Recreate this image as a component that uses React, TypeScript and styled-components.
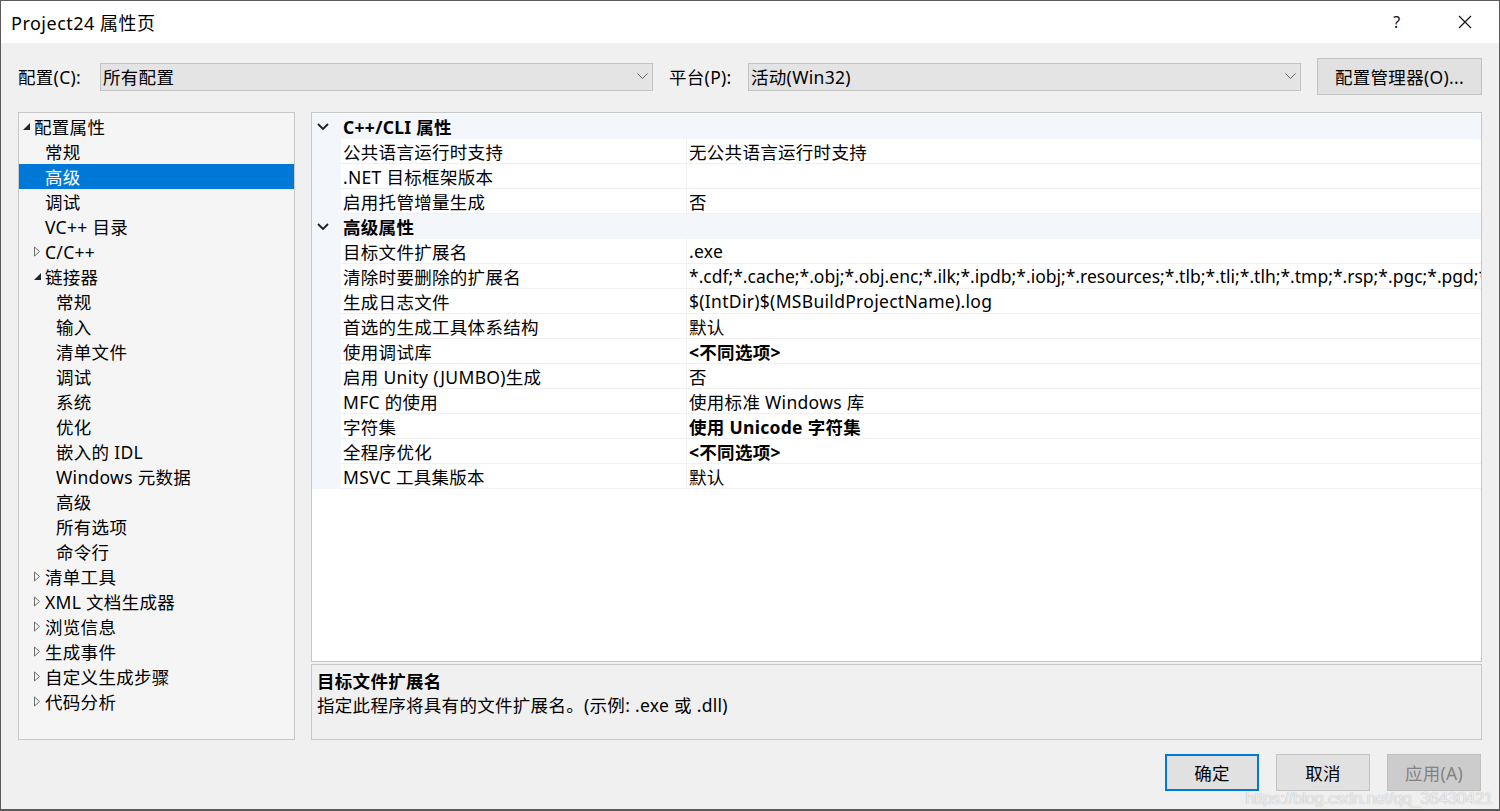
import styled, { createGlobalStyle } from "styled-components";

const GlobalStyle = createGlobalStyle`
  html, body {
    margin: 0;
    padding: 0;
    background: #ffffff;
  }
  body {
    font-family: "Noto Sans", "Noto Sans CJK SC", sans-serif;
    color: #000;
  }
`;

const Window = styled.div`
  position: relative;
  width: 1500px;
  height: 811px;
  box-sizing: border-box;
  border: 1px solid #5a5a5a;
  border-bottom-width: 2px;
  display: flex;
  flex-direction: column;
  background: #f0f0f0;
  overflow: hidden;
  font-size: 17.5px;
  letter-spacing: 0.3px;
`;

const TitleBar = styled.div`
  height: 42px;
  background: #ffffff;
  display: flex;
  align-items: center;
  justify-content: space-between;
  padding-left: 10px;
  font-size: 18px;
  letter-spacing: 0.5px;
`;

const TitleButtons = styled.div`
  display: flex;
  align-items: center;
  height: 100%;
`;

const TitleButton = styled.div`
  width: 68px;
  height: 100%;
  display: flex;
  align-items: center;
  justify-content: center;
  font-size: 16px;
  color: #111;
`;

const Body = styled.div`
  flex: 1;
  display: flex;
  flex-direction: column;
  padding: 15px 17px 0 17px;
`;

const ConfigRow = styled.div`
  height: 37px;
  display: flex;
  align-items: center;
`;

const FieldLabel = styled.span<{ $width: number }>`
  width: ${(p) => p.$width}px;
  flex-shrink: 0;
  white-space: nowrap;
`;

const Combo = styled.div`
  width: 553px;
  flex-shrink: 0;
  height: 28px;
  box-sizing: border-box;
  border: 1px solid #c3c3c3;
  background: #e4e4e4;
  display: flex;
  align-items: center;
  justify-content: space-between;
  padding: 0 4px 0 2px;
  margin-right: 16px;
`;

const Button = styled.div<{ $focused?: boolean; $disabled?: boolean; $width?: number }>`
  width: ${(p) => p.$width ?? 94}px;
  flex-shrink: 0;
  height: 37px;
  box-sizing: border-box;
  border: 1px solid ${(p) => (p.$focused ? "#0078d7" : p.$disabled ? "#bfbfbf" : "#c3c3c3")};
  box-shadow: ${(p) => (p.$focused ? "inset 0 0 0 1px #0078d7" : "none")};
  background: ${(p) => (p.$disabled ? "#cccccc" : "#e1e1e1")};
  color: ${(p) => (p.$disabled ? "#838383" : "#000")};
  display: flex;
  align-items: center;
  justify-content: center;
`;

const Main = styled.div`
  margin-top: 17px;
  height: 628px;
  display: flex;
  gap: 16px;
`;

const Tree = styled.div`
  width: 277px;
  flex-shrink: 0;
  box-sizing: border-box;
  border: 1px solid #c8c8c8;
  background: #f5f5f5;
  padding-top: 1px;
  display: flex;
  flex-direction: column;
`;

const TreeRow = styled.div<{ $level: number; $selected?: boolean }>`
  height: 25px;
  display: flex;
  align-items: center;
  padding-left: ${(p) => 3 + p.$level * 11}px;
  white-space: nowrap;
  background: ${(p) => (p.$selected ? "#0078d7" : "transparent")};
  color: ${(p) => (p.$selected ? "#fff" : "#000")};
`;

const Expander = styled.span`
  width: 12px;
  height: 25px;
  display: flex;
  align-items: center;
  justify-content: flex-start;
  flex-shrink: 0;
`;

const RightCol = styled.div`
  flex: 1;
  min-width: 0;
  display: flex;
  flex-direction: column;
  gap: 2px;
`;

const Grid = styled.div`
  height: 550px;
  box-sizing: border-box;
  border: 1px solid #c8c8c8;
  background: #ffffff;
  padding-top: 1px;
  overflow: hidden;
`;

const CategoryRow = styled.div`
  height: 25px;
  display: flex;
  align-items: center;
  background: #f3f6fb;
  font-weight: 700;
`;

const CategoryTitle = styled.span`
  padding-left: 2px;
`;

const Margin = styled.div`
  width: 29px;
  height: 100%;
  flex-shrink: 0;
  display: flex;
  align-items: center;
  padding-left: 5px;
  box-sizing: border-box;
  background: #f3f6fb;
`;

const PropRow = styled.div`
  height: 25px;
  display: flex;
`;

const Cell = styled.div<{ $name?: boolean; $bold?: boolean; $tight?: boolean }>`
  ${(p) => (p.$name ? "width: 346px; flex-shrink: 0;" : "flex: 1;")}
  padding-left: 2px;
  box-sizing: border-box;
  height: 25px;
  display: flex;
  align-items: center;
  border-bottom: 1px solid #f0f0f0;
  border-right: ${(p) => (p.$name ? "1px solid #f0f0f0" : "none")};
  font-weight: ${(p) => (p.$bold ? 700 : 400)};
  letter-spacing: ${(p) => (p.$tight ? "0" : "0.3px")};
  white-space: nowrap;
  overflow: hidden;
  min-width: 0;
`;

const Description = styled.div`
  flex: 1;
  box-sizing: border-box;
  border: 1px solid #c8c8c8;
  background: #f0f0f0;
  padding: 4px 5px;
  line-height: 24px;
`;

const DescTitle = styled.div`
  font-weight: 700;
`;

const Footer = styled.div`
  margin-top: 14px;
  display: flex;
  justify-content: flex-end;
  gap: 17px;
  padding-right: 1px;
`;

const Watermark = styled.div`
  position: absolute;
  right: 6px;
  bottom: 0px;
  font-family: "Liberation Sans", Arial, sans-serif;
  font-size: 17px;
  letter-spacing: -0.4px;
  color: rgba(255, 255, 255, 0.78);
  text-shadow: 0 0 1px rgba(0, 0, 0, 0.35);
  pointer-events: none;
`;

const Chevron = () => (
  <svg width="11" height="7" viewBox="0 0 11 7">
    <path d="M0.5 0.5 L5.5 5.5 L10.5 0.5" fill="none" stroke="#5f5f5f" strokeWidth="1" />
  </svg>
);

const CategoryChevron = () => (
  <svg width="12" height="8" viewBox="0 0 12 8">
    <path d="M1 1 L6 6 L11 1" fill="none" stroke="#1e1e1e" strokeWidth="1.8" />
  </svg>
);

const Expanded = () => (
  <svg width="9" height="9" viewBox="0 0 9 9">
    <path d="M8 1 L8 8 L1 8 Z" fill="#262626" />
  </svg>
);

const Collapsed = () => (
  <svg width="8" height="11" viewBox="0 0 8 11">
    <path d="M1.5 1 L6.5 5.5 L1.5 10 Z" fill="none" stroke="#6f6f6f" strokeWidth="1" />
  </svg>
);

type TreeItem = { label: string; level: number; state?: "open" | "closed"; selected?: boolean };

const treeItems: TreeItem[] = [
  { label: "配置属性", level: 0, state: "open" },
  { label: "常规", level: 1 },
  { label: "高级", level: 1, selected: true },
  { label: "调试", level: 1 },
  { label: "VC++ 目录", level: 1 },
  { label: "C/C++", level: 1, state: "closed" },
  { label: "链接器", level: 1, state: "open" },
  { label: "常规", level: 2 },
  { label: "输入", level: 2 },
  { label: "清单文件", level: 2 },
  { label: "调试", level: 2 },
  { label: "系统", level: 2 },
  { label: "优化", level: 2 },
  { label: "嵌入的 IDL", level: 2 },
  { label: "Windows 元数据", level: 2 },
  { label: "高级", level: 2 },
  { label: "所有选项", level: 2 },
  { label: "命令行", level: 2 },
  { label: "清单工具", level: 1, state: "closed" },
  { label: "XML 文档生成器", level: 1, state: "closed" },
  { label: "浏览信息", level: 1, state: "closed" },
  { label: "生成事件", level: 1, state: "closed" },
  { label: "自定义生成步骤", level: 1, state: "closed" },
  { label: "代码分析", level: 1, state: "closed" },
];

type Prop = { name: string; value: string; bold?: boolean; tight?: boolean };
type Category = { title: string; props: Prop[] };

const categories: Category[] = [
  {
    title: "C++/CLI 属性",
    props: [
      { name: "公共语言运行时支持", value: "无公共语言运行时支持" },
      { name: ".NET 目标框架版本", value: "" },
      { name: "启用托管增量生成", value: "否" },
    ],
  },
  {
    title: "高级属性",
    props: [
      { name: "目标文件扩展名", value: ".exe" },
      {
        name: "清除时要删除的扩展名",
        value: "*.cdf;*.cache;*.obj;*.obj.enc;*.ilk;*.ipdb;*.iobj;*.resources;*.tlb;*.tli;*.tlh;*.tmp;*.rsp;*.pgc;*.pgd;*.r",
        tight: true,
      },
      { name: "生成日志文件", value: "$(IntDir)$(MSBuildProjectName).log" },
      { name: "首选的生成工具体系结构", value: "默认" },
      { name: "使用调试库", value: "<不同选项>", bold: true },
      { name: "启用 Unity (JUMBO)生成", value: "否" },
      { name: "MFC 的使用", value: "使用标准 Windows 库" },
      { name: "字符集", value: "使用 Unicode 字符集", bold: true },
      { name: "全程序优化", value: "<不同选项>", bold: true },
      { name: "MSVC 工具集版本", value: "默认" },
    ],
  },
];

export default function App() {
  return (
    <Window>
      <GlobalStyle />
      <TitleBar>
        <span>Project24 属性页</span>
        <TitleButtons>
          <TitleButton>?</TitleButton>
          <TitleButton>
            <svg width="14" height="14" viewBox="0 0 14 14">
              <path d="M1 1 L13 13 M13 1 L1 13" stroke="#111" strokeWidth="1.2" />
            </svg>
          </TitleButton>
        </TitleButtons>
      </TitleBar>
      <Body>
        <ConfigRow>
          <FieldLabel $width={82}>配置(C):</FieldLabel>
          <Combo>
            <span>所有配置</span>
            <Chevron />
          </Combo>
          <FieldLabel $width={79}>平台(P):</FieldLabel>
          <Combo>
            <span>活动(Win32)</span>
            <Chevron />
          </Combo>
          <Button $width={165}>配置管理器(O)...</Button>
        </ConfigRow>
        <Main>
          <Tree>
            {treeItems.map((item, i) => (
              <TreeRow key={i} $level={item.level} $selected={item.selected}>
                <Expander>
                  {item.state === "open" && <Expanded />}
                  {item.state === "closed" && <Collapsed />}
                </Expander>
                {item.label}
              </TreeRow>
            ))}
          </Tree>
          <RightCol>
            <Grid>
              {categories.map((cat) => (
                <div key={cat.title}>
                  <CategoryRow>
                    <Margin>
                      <CategoryChevron />
                    </Margin>
                    <CategoryTitle>{cat.title}</CategoryTitle>
                  </CategoryRow>
                  {cat.props.map((p) => (
                    <PropRow key={p.name}>
                      <Margin />
                      <Cell $name>{p.name}</Cell>
                      <Cell $bold={p.bold} $tight={p.tight}>
                        {p.value}
                      </Cell>
                    </PropRow>
                  ))}
                </div>
              ))}
            </Grid>
            <Description>
              <DescTitle>目标文件扩展名</DescTitle>
              <div>指定此程序将具有的文件扩展名。(示例: .exe 或 .dll)</div>
            </Description>
          </RightCol>
        </Main>
        <Footer>
          <Button $focused>确定</Button>
          <Button>取消</Button>
          <Button $disabled>应用(A)</Button>
        </Footer>
      </Body>
      <Watermark>https://blog.csdn.net/qq_36430421</Watermark>
    </Window>
  );
}
